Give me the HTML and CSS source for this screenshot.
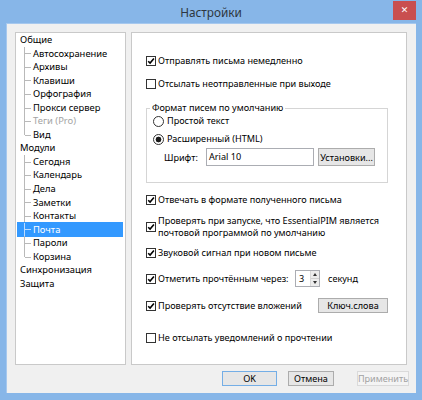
FILE: index.html
```html
<!DOCTYPE html>
<html lang="ru">
<head>
  <meta charset="UTF-8">
  <title>Настройки</title>
  <link rel="stylesheet" href="styles.css">
</head>
<body>
  <div class="window">
    <div class="titlebar">
      <span></span>
      <span class="title">Настройки</span>
      <span class="close-wrap"><span class="close">&#x2715;</span></span>
    </div>
    <div class="client">
      <div class="main">
        <div class="tree">
          <div class="row top">Общие</div>
          <div class="row kid">Автосохранение</div>
          <div class="row kid">Архивы</div>
          <div class="row kid">Клавиши</div>
          <div class="row kid">Орфография</div>
          <div class="row kid">Прокси сервер</div>
          <div class="row kid off">Теги (Pro)</div>
          <div class="row kid last">Вид</div>
          <div class="row top">Модули</div>
          <div class="row kid">Сегодня</div>
          <div class="row kid">Календарь</div>
          <div class="row kid">Дела</div>
          <div class="row kid">Заметки</div>
          <div class="row kid">Контакты</div>
          <div class="row kid sel">Почта</div>
          <div class="row kid">Пароли</div>
          <div class="row kid last">Корзина</div>
          <div class="row top">Синхронизация</div>
          <div class="row top">Защита</div>
        </div>

        <div class="panel">
          <div class="opt">
            <span class="box on"><svg viewBox="0 0 8 8"><path d="M1.2 4.2 L3.1 6.1 L6.9 1.6"/></svg></span>
            <span>Отправлять письма немедленно</span>
          </div>
          <div class="opt gap9">
            <span class="box"></span>
            <span>Отсылать неотправленные при выходе</span>
          </div>

          <fieldset class="group">
            <legend>Формат писем по умолчанию</legend>
            <div class="opt first">
              <span class="radio"></span>
              <span>Простой текст</span>
            </div>
            <div class="opt gap4">
              <span class="radio on"></span>
              <span>Расширенный (HTML)</span>
            </div>
            <div class="font-row">
              <span class="font-label">Шрифт:</span>
              <span class="field">Arial 10</span>
              <span class="btn small">Установки...</span>
            </div>
          </fieldset>

          <div class="opt gap10">
            <span class="box on"><svg viewBox="0 0 8 8"><path d="M1.2 4.2 L3.1 6.1 L6.9 1.6"/></svg></span>
            <span>Отвечать в формате полученного письма</span>
          </div>
          <div class="opt multi gap8">
            <span class="box on"><svg viewBox="0 0 8 8"><path d="M1.2 4.2 L3.1 6.1 L6.9 1.6"/></svg></span>
            <span>Проверять при запуске, что EssentialPIM является<br>почтовой программой по умолчанию</span>
          </div>
          <div class="opt gap7">
            <span class="box on"><svg viewBox="0 0 8 8"><path d="M1.2 4.2 L3.1 6.1 L6.9 1.6"/></svg></span>
            <span>Звуковой сигнал при новом письме</span>
          </div>
          <div class="opt tall gap10">
            <span class="box on"><svg viewBox="0 0 8 8"><path d="M1.2 4.2 L3.1 6.1 L6.9 1.6"/></svg></span>
            <span class="label-mark">Отметить прочтённым через:</span>
            <span class="spin">
              <span class="spin-val">3</span>
              <span class="spin-btns">
                <span class="arrow up"></span>
                <span class="arrow down"></span>
              </span>
            </span>
            <span class="unit">секунд</span>
          </div>
          <div class="opt mid gap11">
            <span class="box on"><svg viewBox="0 0 8 8"><path d="M1.2 4.2 L3.1 6.1 L6.9 1.6"/></svg></span>
            <span class="label-attach">Проверять отсутствие вложений</span>
            <span class="btn keys">Ключ.слова</span>
          </div>
          <div class="opt gap18">
            <span class="box"></span>
            <span>Не отсылать уведомлений о прочтении</span>
          </div>
        </div>
      </div>

      <div class="buttons">
        <span class="btn dialog ok">OK</span>
        <span class="btn dialog cancel">Отмена</span>
        <span class="btn dialog apply">Применить</span>
      </div>
    </div>
  </div>
</body>
</html>
```

FILE: styles.css
```css
* {
  box-sizing: border-box;
  margin: 0;
  padding: 0;
}
body {
  width: 422px;
  height: 400px;
  background: #87b6e8;
  font-family: 'Noto Sans', 'Open Sans', sans-serif;
  font-size: 9.1px;
  color: #000;
  overflow: hidden;
}
.window {
  display: flex;
  flex-direction: column;
  height: 400px;
  padding: 0 6px 7px 6px;
}
.titlebar {
  height: 23px;
  display: grid;
  grid-template-columns: 1fr auto 1fr;
  align-items: start;
}
.title {
  font-size: 11.8px;
  color: #2e3640;
  line-height: 24px;
}
.close-wrap {
  display: flex;
  justify-content: flex-end;
}
.close {
  width: 23px;
  height: 19px;
  margin-top: 1px;
  background: #c94f4f;
  color: #fff;
  font-size: 9px;
  font-weight: bold;
  text-align: center;
  line-height: 19px;
  font-family: 'DejaVu Sans', sans-serif;
}
.client {
  flex: 1;
  background: #f0f0f0;
  border-top: 1px solid #a6c8ee;
  border-left: 1px solid #a6c8ee;
  padding: 8px 7px 0 8px;
  display: flex;
  flex-direction: column;
}
.main {
  display: flex;
  gap: 5px;
  height: 333px;
  margin-right: 2px;
}

/* left tree */
.tree {
  width: 112px;
  background: #fff;
  border: 1px solid #c9c9c9;
  padding: 0 2px 0 1px;
  font-size: 9.4px;
}
.row {
  height: 13.55px;
  line-height: 13.55px;
  padding-left: 3px;
  position: relative;
  white-space: nowrap;
}
.row.kid {
  padding-left: 16px;
}
.row.kid::before {
  content: "";
  position: absolute;
  left: 7px;
  top: 0;
  height: 100%;
  border-left: 1px solid #b9b9b9;
}
.row.kid.last::before {
  height: 50%;
}
.row.kid::after {
  content: "";
  position: absolute;
  left: 8px;
  top: 50%;
  width: 6px;
  border-top: 1px solid #b9b9b9;
}
.row.off {
  color: #a3a3a3;
}
.row.sel {
  background: #3399ff;
  color: #fff;
  box-shadow: 0 -1px 0 #3399ff, 0 1px 0 #3399ff;
}
.row.sel::before,
.row.sel::after {
  border-color: #bcdcff;
}

/* right panel */
.panel {
  flex: 1;
  background: #fff;
  border: 1px solid #c9c9c9;
  padding: 21px 18px 0 14px;
  display: flex;
  flex-direction: column;
}
.opt {
  display: flex;
  align-items: center;
  gap: 2px;
  height: 14px;
  line-height: 14px;
  white-space: nowrap;
}
.opt.multi {
  height: 24px;
  line-height: 12px;
}
.opt.tall {
  height: 17px;
}
.opt.mid {
  height: 15px;
}
.gap4 { margin-top: 4px; }
.gap7 { margin-top: 7px; }
.gap8 { margin-top: 8px; }
.gap9 { margin-top: 9px; }
.gap10 { margin-top: 10px; }
.gap11 { margin-top: 11px; }
.gap18 { margin-top: 18px; }

.box {
  width: 10px;
  height: 10px;
  flex: none;
  border: 1px solid #333;
  background: #fff;
  display: flex;
}
.box svg {
  width: 8px;
  height: 8px;
  fill: none;
  stroke: #000;
  stroke-width: 1.6;
}
.radio {
  width: 11px;
  height: 11px;
  flex: none;
  border: 1px solid #333;
  border-radius: 50%;
  background: #fff;
}
.radio.on {
  background: radial-gradient(circle, #1a1a1a 0 2.6px, #fff 3.2px);
}

.group {
  margin-top: 12px;
  border: 1px solid #d5d5d5;
  padding: 0 0 16px 6px;
}
.group legend {
  line-height: 10px;
  padding: 0 2px;
  margin-left: -3px;
}
.group .opt {
  gap: 3px;
}
.group .opt.first {
  margin-top: 1px;
}
.font-row {
  display: flex;
  align-items: center;
  margin-top: 2px;
  height: 18px;
}
.font-label {
  margin-left: 11px;
  width: 42px;
}
.field {
  width: 108px;
  height: 18px;
  border: 1px solid #abadb3;
  background: #fff;
  padding-left: 2px;
  line-height: 16px;
}

.btn {
  display: flex;
  align-items: center;
  justify-content: center;
  background: #e6e6e6;
  border: 1px solid #acacac;
  white-space: nowrap;
}
.btn.small {
  width: 57px;
  height: 18px;
  margin-left: 4px;
}
.label-mark {
  width: 135px;
}
.spin {
  display: flex;
  width: 25px;
  height: 17px;
  border: 1px solid #abadb3;
  background: #fff;
}
.spin-val {
  width: 14px;
  padding-left: 3px;
  line-height: 15px;
}
.spin-btns {
  flex: 1;
  display: flex;
  flex-direction: column;
  border-left: 1px solid #d8d8d8;
}
.arrow {
  flex: 1;
  background: #ececec;
  display: flex;
  align-items: center;
  justify-content: center;
}
.arrow.up {
  border-bottom: 1px solid #d0d0d0;
}
.arrow.up::before {
  content: "";
  border-left: 2.5px solid transparent;
  border-right: 2.5px solid transparent;
  border-bottom: 3px solid #333;
}
.arrow.down::before {
  content: "";
  border-left: 2.5px solid transparent;
  border-right: 2.5px solid transparent;
  border-top: 3px solid #333;
}
.unit {
  margin-left: 6px;
}
.label-attach {
  width: 158px;
}
.btn.keys {
  width: 70px;
  height: 15px;
}

/* dialog buttons */
.buttons {
  display: flex;
  justify-content: flex-end;
  margin-top: 6px;
}
.btn.dialog {
  height: 15px;
}
.btn.ok {
  width: 55px;
  border-color: #74aee6;
}
.btn.cancel {
  width: 46px;
  margin-left: 11px;
}
.btn.apply {
  width: 52px;
  margin-left: 23px;
  background: #f4f4f4;
  border-color: #dadada;
  color: #a2a2a2;
}
```
